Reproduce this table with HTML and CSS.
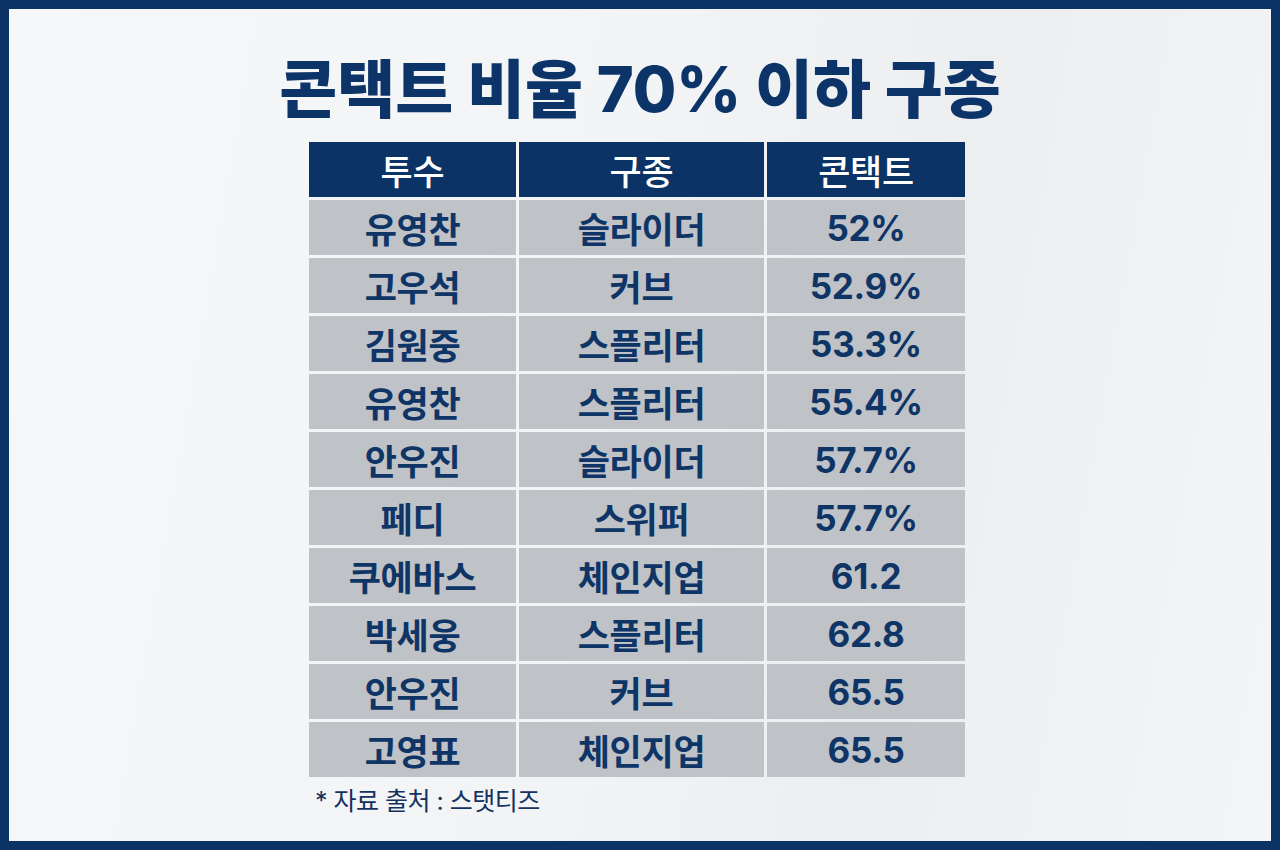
FILE: index.html
```html
<!DOCTYPE html>
<html lang="ko">
<head>
<meta charset="utf-8">
<link rel="stylesheet" href="styles.css">
</head>
<body>
<div class="frame">
  <h1 class="title">콘택트 비율 70% 이하 구종</h1>
  <div class="table">
    <div class="th">투수</div><div class="th">구종</div><div class="th">콘택트</div>
    <div class="td">유영찬</div><div class="td">슬라이더</div><div class="td">52%</div>
    <div class="td">고우석</div><div class="td">커브</div><div class="td">52.9%</div>
    <div class="td">김원중</div><div class="td">스플리터</div><div class="td">53.3%</div>
    <div class="td">유영찬</div><div class="td">스플리터</div><div class="td">55.4%</div>
    <div class="td">안우진</div><div class="td">슬라이더</div><div class="td">57.7%</div>
    <div class="td">페디</div><div class="td">스위퍼</div><div class="td">57.7%</div>
    <div class="td">쿠에바스</div><div class="td">체인지업</div><div class="td">61.2</div>
    <div class="td">박세웅</div><div class="td">스플리터</div><div class="td">62.8</div>
    <div class="td">안우진</div><div class="td">커브</div><div class="td">65.5</div>
    <div class="td">고영표</div><div class="td">체인지업</div><div class="td">65.5</div>
  </div>
  <p class="source">* 자료 출처 : 스탯티즈</p>
</div>
</body>
</html>
```
FILE: styles.css
```css
html, body {
  margin: 0;
  padding: 0;
}
body {
  width: 1280px;
  height: 850px;
  overflow: hidden;
  font-family: "Inter", "Noto Sans CJK KR", "Noto Sans", sans-serif;
}
.frame {
  box-sizing: border-box;
  width: 1280px;
  height: 850px;
  border: 9px solid #0b3366;
  background: linear-gradient(100deg, #f6f7f8 0%, #f3f4f5 45%, #eceef0 70%, #f4f5f6 100%);
  display: flex;
  flex-direction: column;
  align-items: center;
}
.title {
  margin: 40px 0 0;
  font-size: 63px;
  line-height: 80px;
  font-weight: 800;
  color: #0c3468;
  letter-spacing: 0;
}
.table {
  margin: 13px 0 0 -6px;
  display: grid;
  grid-template-columns: 207px 245px 198px;
  grid-auto-rows: 55px;
  column-gap: 3px;
  row-gap: 3px;
}
.th, .td {
  display: flex;
  align-items: center;
  justify-content: center;
  font-size: 35px;
  letter-spacing: -0.3px;
}
.th {
  background: #0b3366;
  color: #ffffff;
  font-weight: 500;
}
.td {
  background: #bfc2c7;
  color: #0e3566;
  font-weight: 700;
}
.source {
  align-self: flex-start;
  margin: 8px 0 0 306px;
  font-size: 25px;
  line-height: 32px;
  color: #14325f;
  letter-spacing: -0.5px;
}
```
